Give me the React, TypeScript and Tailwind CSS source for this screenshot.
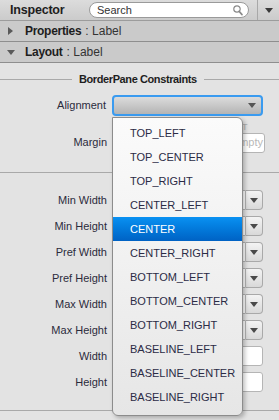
import React from "react";

const font = { fontFamily: '"Liberation Sans", Arial, sans-serif' };

function Tri({ dir, className }: { dir: "down" | "right"; className?: string }) {
  return dir === "down" ? (
    <svg width="8" height="5" viewBox="0 0 8 5" className={className}>
      <path d="M0 0 L8 0 L4 5 Z" fill="currentColor" />
    </svg>
  ) : (
    <svg width="5" height="8" viewBox="0 0 5 8" className={className}>
      <path d="M0 0 L5 4 L0 8 Z" fill="currentColor" />
    </svg>
  );
}

function ComboField() {
  return (
    <div className="flex h-[20px] w-[151px]">
      <div className="h-full flex-1 rounded-l-[3px] border border-[#b5b5b5] bg-white" />
      <div className="flex h-full w-[17px] items-center justify-center rounded-r-[4px] border border-l-0 border-[#a9a9a9] bg-gradient-to-b from-[#f4f4f4] to-[#d9d9d9]">
        <Tri dir="down" className="text-[#4a4a4a]" />
      </div>
    </div>
  );
}

function TextField() {
  return <div className="h-[20px] w-[151px] rounded-[3px] border border-[#b5b5b5] bg-white" />;
}

const rows: { label: string; combo: boolean }[] = [
  { label: "Min Width", combo: true },
  { label: "Min Height", combo: true },
  { label: "Pref Width", combo: true },
  { label: "Pref Height", combo: true },
  { label: "Max Width", combo: true },
  { label: "Max Height", combo: true },
  { label: "Width", combo: false },
  { label: "Height", combo: false },
];

const items = [
  "TOP_LEFT",
  "TOP_CENTER",
  "TOP_RIGHT",
  "CENTER_LEFT",
  "CENTER",
  "CENTER_RIGHT",
  "BOTTOM_LEFT",
  "BOTTOM_CENTER",
  "BOTTOM_RIGHT",
  "BASELINE_LEFT",
  "BASELINE_CENTER",
  "BASELINE_RIGHT",
];

export default function App() {
  return (
    <div
      className="relative h-[420px] w-[279px] overflow-hidden bg-[#e3e3e3] text-[11px] text-[#2b2b3c]"
      style={font}
    >
      {/* header */}
      <div className="flex h-[21px] items-center border-b border-[#9c9c9c] bg-gradient-to-b from-[#dcdcdc] to-[#cbcbcb]">
        <div className="w-[89px] pl-[10px] text-[12.5px] font-bold tracking-[-0.2px] text-[#1e1e1e]">Inspector</div>
        <div className="flex h-[16px] w-[160px] items-center rounded-full border border-[#9a9a9a] bg-white pl-[7px] pr-[5px]">
          <span className="flex-1 text-[11px] leading-none text-[#333]">Search</span>
          <svg width="10" height="11" viewBox="0 0 10 11">
            <circle cx="4" cy="4" r="3.2" fill="none" stroke="#8a8a8a" strokeWidth="1.2" />
            <path d="M6.2 6.4 L9 9.6" stroke="#8a8a8a" strokeWidth="1.6" strokeLinecap="round" />
          </svg>
        </div>
        <div className="ml-[8px] flex h-full flex-1 items-center justify-center border-l border-[#a8a8a8]">
          <Tri dir="down" className="text-[#3a3a3a]" />
        </div>
      </div>

      {/* Properties row */}
      <div className="flex h-[21px] items-center border-b border-[#8e8e8e] bg-[#cacaca]">
        <Tri dir="right" className="ml-[8px] text-[#5a5a5a]" />
        <span className="ml-[12px] text-[12px] font-bold tracking-[-0.3px] text-[#1e1e1e]">Properties</span>
        <span className="ml-[4px] text-[12px] text-[#333]">: Label</span>
      </div>

      {/* Layout row */}
      <div className="flex h-[21px] items-center border-b border-[#8e8e8e] bg-[#cacaca]">
        <Tri dir="down" className="ml-[7px] text-[#5a5a5a]" />
        <span className="ml-[10px] text-[12px] font-bold tracking-[-0.3px] text-[#1e1e1e]">Layout</span>
        <span className="ml-[4px] text-[12px] text-[#333]">: Label</span>
      </div>

      {/* section title */}
      <div className="flex h-[32px] items-center">
        <div className="h-px w-[72px] bg-[#a9a9a9]" />
        <span className="mx-[7px] text-[11px] font-bold tracking-[-0.4px] text-[#1e1e1e]">BorderPane Constraints</span>
        <div className="h-px flex-1 bg-[#a9a9a9]" />
      </div>

      {/* Alignment */}
      <div className="flex h-[21px] items-center">
        <div className="w-[107px] pr-[1px] text-right">Alignment</div>
        <div className="ml-[5px] flex h-[21px] w-[151px] items-center justify-end rounded-[4px] border-2 border-[#3a9bf0] bg-gradient-to-b from-[#dcdcdc] to-[#b4b4b4] pr-[5px]">
          <Tri dir="down" className="text-[#555]" />
        </div>
      </div>

      {/* Margin */}
      <div className="flex h-[16px] items-end">
        <div className="ml-[242px] text-[9px] leading-none text-[#b0b0b0]">T</div>
      </div>
      <div className="flex h-[21px] items-center">
        <div className="w-[107px] text-right">Margin</div>
        <div className="ml-[5px] flex h-[20px] w-[153px] items-center justify-end overflow-hidden rounded-[3px] border border-[#b5b5b5] bg-white pr-[1px]">
          <span className="text-[11px] text-[#b8b8b8]">Empty</span>
        </div>
      </div>

      <div className="mt-[19px] h-px w-full bg-[#a9a9a9]" />

      <div className="mt-[17px] flex flex-col gap-[6px]">
        {rows.map((r) => (
          <div key={r.label} className="flex h-[20px] items-center">
            <div className="w-[107px] text-right">{r.label}</div>
            <div className="ml-[5px]">{r.combo ? <ComboField /> : <TextField />}</div>
          </div>
        ))}
      </div>

      <div className="mt-[18px] h-px w-full bg-[#a9a9a9]" />

      {/* popup */}
      <div className="absolute left-[112px] top-[117px] h-[299px] w-[131px] rounded-tr-[6px] rounded-b-[6px] border border-[#8c8c8c] bg-gradient-to-b from-[#fbfbfb] to-[#e6e6e6] pt-[3px] shadow-[2px_2px_4px_rgba(0,0,0,0.25)]">
        {items.map((it) => (
          <div
            key={it}
            className={
              it === "CENTER"
                ? "flex h-[24px] items-center bg-gradient-to-b from-[#0a91f2] to-[#0062c4] pl-[17px] text-[11px] text-white"
                : "flex h-[24px] items-center pl-[17px] text-[11px] text-[#2b2b45]"
            }
          >
            {it}
          </div>
        ))}
      </div>
    </div>
  );
}
